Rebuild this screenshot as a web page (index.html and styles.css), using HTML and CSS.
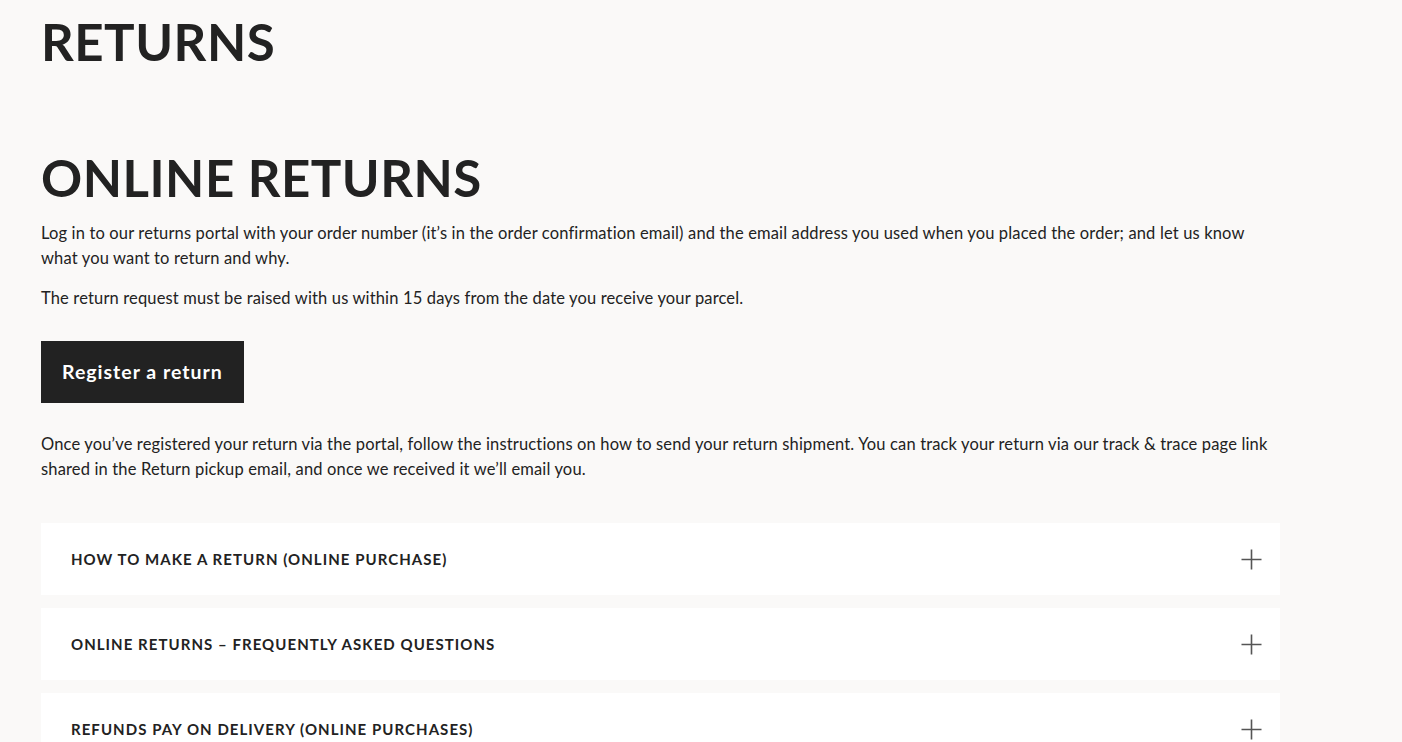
FILE: index.html
```html
<!DOCTYPE html>
<html lang="en">
<head>
<meta charset="utf-8">
<title>Returns</title>
<link rel="stylesheet" href="styles.css">
</head>
<body>
<main class="page">
  <h1 class="page-title">RETURNS</h1>
  <section class="online">
    <h2 class="section-title">ONLINE RETURNS</h2>
    <p class="text">Log in to our returns portal with your order number (it’s in the order confirmation email) and the email address you used when you placed the order; and let us know what you want to return and why.</p>
    <p class="text">The return request must be raised with us within 15 days from the date you receive your parcel.</p>
    <a class="btn" href="#">Register a return</a>
    <p class="text text-after">Once you’ve registered your return via the portal, follow the instructions on how to send your return shipment. You can track your return via our track &amp; trace page link shared in the Return pickup email, and once we received it we’ll email you.</p>
    <div class="accordion">
      <div class="acc-item"><span class="acc-label">HOW TO MAKE A RETURN (ONLINE PURCHASE)</span><svg class="plus" width="21" height="21" viewBox="0 0 21 21"><path d="M10.5 0.5V20.5M0.5 10.5H20.5" stroke="#555" stroke-width="1.6" fill="none"/></svg></div>
      <div class="acc-item"><span class="acc-label">ONLINE RETURNS – FREQUENTLY ASKED QUESTIONS</span><svg class="plus" width="21" height="21" viewBox="0 0 21 21"><path d="M10.5 0.5V20.5M0.5 10.5H20.5" stroke="#555" stroke-width="1.6" fill="none"/></svg></div>
      <div class="acc-item"><span class="acc-label">REFUNDS PAY ON DELIVERY (ONLINE PURCHASES)</span><svg class="plus" width="21" height="21" viewBox="0 0 21 21"><path d="M10.5 0.5V20.5M0.5 10.5H20.5" stroke="#555" stroke-width="1.6" fill="none"/></svg></div>
    </div>
  </section>
</main>
</body>
</html>
```
FILE: styles.css
```css
html, body {
  margin: 0;
  padding: 0;
  background: #faf9f8;
  color: #222;
  font-family: Lato, "Liberation Sans", sans-serif;
}
.page {
  padding: 0 122px 0 41px;
}
.page-title {
  margin: 0;
  padding-top: 12px;
  font-size: 51px;
  line-height: 60px;
  font-weight: 700;
  letter-spacing: 0.5px;
}
.online {
  margin-top: 76px;
}
.section-title {
  margin: 0 0 13px;
  font-size: 51px;
  line-height: 60px;
  font-weight: 700;
  letter-spacing: 0.5px;
}
.text {
  margin: 0 0 15px;
  font-size: 16.5px;
  line-height: 25px;
  letter-spacing: 0.15px;
}
.btn {
  display: inline-block;
  margin-top: 15px;
  background: #222;
  color: #fff;
  font-weight: 700;
  font-size: 19.5px;
  letter-spacing: 1px;
  line-height: 62px;
  padding: 0 21px;
  text-decoration: none;
}
.text-after {
  margin-top: 29px;
  margin-bottom: 0;
}
.accordion {
  margin-top: 41px;
  display: flex;
  flex-direction: column;
  gap: 13px;
}
.acc-item {
  background: #fff;
  height: 72px;
  display: flex;
  align-items: center;
  justify-content: space-between;
  padding: 0 18px 0 30px;
}
.acc-label {
  font-size: 15px;
  font-weight: 700;
  letter-spacing: 1.05px;
}
.plus {
  display: block;
}
```
